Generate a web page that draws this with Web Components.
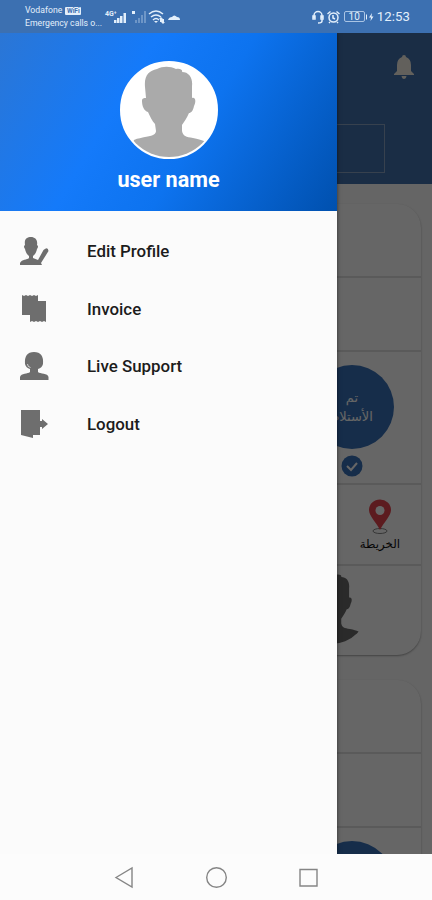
<!DOCTYPE html>
<html lang="en">
  <head>
    <meta charset="utf-8">
    <title>Navigation drawer</title>
    <meta name="viewport" content="width=device-width, initial-scale=1.0">
    <style>
      body {
        margin: 0;
        font-family: Roboto, "Liberation Sans", sans-serif;
        overflow: hidden;
      }
    </style>
    <script>
      const HEAD = `
        <path d="M6 97L14 79C18 77 22 77 25 76C33 75 36 73 36 70L35 63C32 60 30 55 28 51C24 50 22 45 22 40C22 37 24 37 26 37L25 26C24 14 29 10 37 8C43 5 50 5 56 8C60 7 63 9 62 11C69 11 73 17 72 25L72 37C76 36 76 41 74 45C73 50 71 52 69 52C67 57 64 61 62 64L62 70C63 75 66 76 73 77C78 78 81 79 84 80L93 97Z"/>`;

      // Attaches an open root filled from the class template
      class BaseElement extends HTMLElement {
        constructor() {
          super();
          const template = document.createElement('template');
          template.innerHTML = this.constructor.markup;
          this.attachShadow({ mode: 'open' }).appendChild(template.content.cloneNode(true));
        }
      }

      class PhoneScreen extends BaseElement {
        static tag = 'x-phone-screen';
        static markup = `
          <style>
            :host { display: flex; flex-direction: column; width: 432px; height: 900px; }
            main { position: relative; flex: 1; overflow: hidden; min-height: 0; }
            .scrim { position: absolute; inset: 0; background: rgba(0, 0, 0, .6); }
            .drawer { position: absolute; top: 0; bottom: 0; left: 0; }
          </style>
          <slot name="status"></slot>
          <main>
            <slot name="page"></slot>
            <div class="scrim"></div>
            <div class="drawer"><slot name="drawer"></slot></div>
          </main>
          <slot name="nav"></slot>`;
      }

      class StatusBar extends BaseElement {
        static tag = 'x-status-bar';
        static markup = `
          <style>
            :host { display: flex; height: 33px; background: #3c70b1; color: #e3effb; }
            .carrier { margin: 4px 0 0 25px; width: 79px; font-size: 8.7px; line-height: 13px; white-space: nowrap; }
            .carrier > div { display: flex; align-items: center; }
            .carrier .calls { font-size: 8.7px; }
            .badge { margin-left: 3px; padding: 0 1px; width: 14px; height: 8px; border-radius: 1px; background: #e3effb; color: #3c70b1; font-size: 6.5px; font-weight: 700; line-height: 8px; text-align: center; }
            svg { display: block; flex: none; }
            .signals { margin-top: 8px; }
            .right { display: flex; align-items: center; height: 33px; margin-left: auto; padding-right: 22px; }
            .battery { width: 19px; height: 9px; margin-left: 4px; border: 1px solid #a9c4e4; border-radius: 2px; font-size: 10px; line-height: 9.5px; text-align: center; }
            .time { margin-left: 3px; font-size: 13.2px; letter-spacing: .1px; }
          </style>
          <div class="carrier">
            <div>Vodafone<span class="badge">WiFi</span></div>
            <div class="calls">Emergency calls o...</div>
          </div>
          <svg class="signals" width="78" height="18" fill="#e3effb">
            <text x="1" y="8" font-size="7" font-weight="700">4G⁺</text>
            <path d="M10 12h2.500v3h-2.500zM13 10h2.500v5h-2.500zM16 8h2.500v7h-2.500zM19.500 5h2.500v10h-2.500z"/>
            <path d="M28 3h3v3h-3z"/>
            <path opacity=".3" d="M31 12h2v3h-2zM34 10h2v5h-2zM37 7h2v8h-2zM40 3h2v12h-2z"/>
            <g fill="none" stroke="#e3effb" stroke-width="1.5"><path d="M45 6q7-6 14 0M47 9q5-4 10 0M49 12q3-3 6 0"/></g>
            <path d="M50 13h4l-2 2zM55 11l2-2 2 2h-1v3h-2v-3zM60 11v3h1l-2 2-2-2h1v-3z"/>
            <path d="M64 12q1-3 4-3q2-3 5 0q3 0 3 3z"/>
          </svg>
          <div class="right">
            <svg width="29" height="14" fill="none" stroke="#e3effb" stroke-width="1.5">
              <path d="M3 8V5.500A4 4 0 0 1 11 5.500V8M2 6v3h2V6zM10 6v3h2V6zM11 9v2q0 2-4 2"/>
              <circle cx="22.500" cy="7.500" r="4.500"/><path d="M16.500 4l3-2.500M25.500 1.500l3 2.500M22 5v3l2 1M19 12l-1 1M26 12l1 1"/>
            </svg>
            <div class="battery">10</div>
            <svg width="9" height="12" fill="#e3effb"><path d="M1 3.500h1v5h-1zM7 2L4 6.500h2L5.500 10L8.500 5.500h-2z"/></svg>
            <div class="time">12:53</div>
          </div>`;
      }

      class NavDrawer extends BaseElement {
        static tag = 'x-nav-drawer';
        static markup = `
          <style>
            :host { display: flex; flex-direction: column; width: 337px; height: 100%; background: #fbfbfb; box-shadow: 0 0 4px rgba(0, 0, 0, .55); }
            header { display: flex; flex-direction: column; align-items: center; box-sizing: border-box; height: 178px; padding-top: 28px; background: linear-gradient(121deg, #2b76d5 0%, #147afa 36%, #0d73ef 58%, #0050ae 100%); }
            .avatar { box-sizing: border-box; width: 98px; height: 98px; border: 2px solid #fff; border-radius: 50%; background: #fff; overflow: hidden; }
            svg { display: block; fill: #aaa; }
            .name { margin-top: 8px; color: #fff; font-size: 21.6px; font-weight: 700; line-height: 26px; }
            nav { display: flex; flex-direction: column; padding-top: 11px; }
          </style>
          <header>
            <div class="avatar"><svg width="94" height="94" viewBox="2 2 94 94">${HEAD}</svg></div>
            <div class="name"><slot name="name"></slot></div>
          </header>
          <nav><slot></slot></nav>`;
      }

      const ICONS = {
        profile: '<path d="M0 29V27C2 23 7 24 9 22V20Q6 18 5 13Q3 10 5 9C4 3 7 1 11 1S18 4 17 9Q19 10 17 13Q16 18 13 20V22L18 24L23.500 14Q28 10 28.500 15L21 27L22 29Z"/>',
        invoice: '<path d="M2 1l2 1 2-1 2 1 2-1 2 1 2-1 2 1 2-1V7H26V28l-2-1-2 1-2-1-2 1-2-1-2 1-2-1-2 1V21H2Z"/>',
        support: '<path d="M0 29V26C1 22 8 23 10 21V18Q6 17 5 13Q4 1 14 1Q24 1 23 13Q22 17 18 18V21C20 23 28 22 28.500 26V29Z"/><path d="M7.500 13q0 3 3 3.500" fill="none" stroke="#fbfbfb" stroke-width=".7"/>',
        logout: '<path d="M1 1H20V12H22V10L28 15L22 20V18H20V26H13V29L1 26Z"/>'
      };

      class DrawerItem extends BaseElement {
        static tag = 'x-drawer-item';
        static observedAttributes = ['icon'];
        static markup = `
          <style>
            :host { display: flex; align-items: center; height: 57.8px; padding-left: 20px; color: #1c1c1c; font-size: 16.9px; font-weight: 500; }
            svg { width: 29px; height: 30px; margin-right: 38px; fill: #6e6e6e; }
          </style>
          <svg viewBox="0 0 29 30"></svg>
          <slot></slot>`;

        attributeChangedCallback(name, oldVal, val) {
          this.shadowRoot.querySelector('svg').innerHTML = ICONS[val] || '';
        }
      }

      class HomePage extends BaseElement {
        static tag = 'x-home-page';
        static markup = `
          <style>
            :host { display: flex; flex-direction: column; height: 100%; background: #fcfcfc; }
            header { display: flex; flex-direction: column; align-items: flex-end; flex: none; box-sizing: border-box; height: 151px; background: #4170ac; }
            header svg { margin: 20px 16px 0 0; }
            .search { box-sizing: border-box; width: 338px; height: 49px; margin: 43px 47px 0 0; border: 1px solid #8ba4c4; }
            .list { display: flex; flex-direction: column; gap: 25px; padding: 20px 11px 0; }
          </style>
          <header>
            <svg width="24" height="28" fill="#f4f0e6"><path d="M10 4Q10 2 12 2T14 4Q19 6 19 12V18L22 21V22H2V21L5 18V12Q5 6 10 4ZM9.500 23H14.500Q14 26 12 26T9.500 23Z"/></svg>
            <div class="search"></div>
          </header>
          <div class="list"><slot></slot></div>`;
      }

      class OrderCard extends BaseElement {
        static tag = 'x-order-card';
        static markup = `
          <style>
            :host { display: flex; flex-direction: column; flex: none; box-sizing: border-box; height: 451px; border-radius: 24px; background: #fff; box-shadow: 0 1px 2px rgba(0, 0, 0, .35); overflow: hidden; font-family: "DejaVu Sans", sans-serif; }
            .row { display: flex; flex-direction: column; align-items: flex-end; flex: none; box-sizing: border-box; border-bottom: 2px solid #e0e0e0; }
            .title { height: 74px; }
            .info { height: 74px; }
            .state { height: 133px; padding: 13px 27px 0 0; }
            .circle { display: flex; flex-direction: column; align-items: center; justify-content: center; width: 84px; height: 84px; border-radius: 50%; background: #3871b8; color: #fff; font-size: 13px; line-height: 19px; white-space: nowrap; }
            .check { margin: 6px 31px 0 0; }
            .place { height: 81px; padding: 14px 21px 0 0; }
            .map { display: flex; flex-direction: column; align-items: center; color: #111; font-size: 11.8px; font-weight: 500; line-height: 18px; }
            .person { display: flex; justify-content: flex-end; padding: 4px 53px 0 0; }
            .person svg { border-radius: 50%; fill: #696969; }
            svg { display: block; }
          </style>
          <div class="row title"></div>
          <div class="row info"></div>
          <div class="row state">
            <div class="circle" dir="rtl"><slot name="state"></slot></div>
            <svg class="check" width="22" height="22"><circle cx="11" cy="11" r="10.500" fill="#3871b8"/><path d="M6 11l4 4 6-7" fill="none" stroke="#fff" stroke-width="2"/></svg>
          </div>
          <div class="row place">
            <div class="map" dir="rtl">
              <svg width="26" height="36" viewBox="0 0 26 36">
                <ellipse cx="13" cy="32" rx="7" ry="2.500" fill="none" stroke="#888"/>
                <path fill="#e6454f" d="M13 31C9 23 2 17 2 11A11 10.500 0 0 1 24 11C24 17 17 23 13 31Z"/>
                <circle cx="13" cy="11.500" r="4.500" fill="#fff"/>
              </svg>
              <slot name="place"></slot>
            </div>
          </div>
          <div class="person">
            <svg width="74" height="74" viewBox="2 2 94 94">${HEAD}</svg>
          </div>`;
      }

      class SystemNav extends BaseElement {
        static tag = 'x-system-nav';
        static markup = `
          <style>
            :host { display: flex; align-items: center; justify-content: center; gap: 68px; height: 46px; background: #fcfcfc; }
            svg { display: block; fill: none; stroke: #858585; stroke-width: 1.4; }
          </style>
          <svg width="24" height="24"><path d="M4 12.500L20 3V22Z"/></svg>
          <svg width="24" height="24"><circle cx="12.500" cy="12.500" r="9.800"/></svg>
          <svg width="24" height="24"><path d="M4 4.500H21V21H4Z"/></svg>`;
      }

      [PhoneScreen, StatusBar, NavDrawer, DrawerItem, HomePage, OrderCard, SystemNav]
        .forEach(x => { window.customElements.define(x.tag, x) });
    </script>
  </head>
  <body>
    <x-phone-screen>
      <x-status-bar slot="status"></x-status-bar>
      <x-home-page slot="page">
        <x-order-card>
          <span slot="state">تم</span>
          <span slot="state">الأستلام</span>
          <span slot="place">الخريطة</span>
        </x-order-card>
        <x-order-card></x-order-card>
      </x-home-page>
      <x-nav-drawer slot="drawer">
        <span slot="name">user name</span>
        <x-drawer-item icon="profile">Edit Profile</x-drawer-item>
        <x-drawer-item icon="invoice">Invoice</x-drawer-item>
        <x-drawer-item icon="support">Live Support</x-drawer-item>
        <x-drawer-item icon="logout">Logout</x-drawer-item>
      </x-nav-drawer>
      <x-system-nav slot="nav"></x-system-nav>
    </x-phone-screen>
  </body>
</html>
